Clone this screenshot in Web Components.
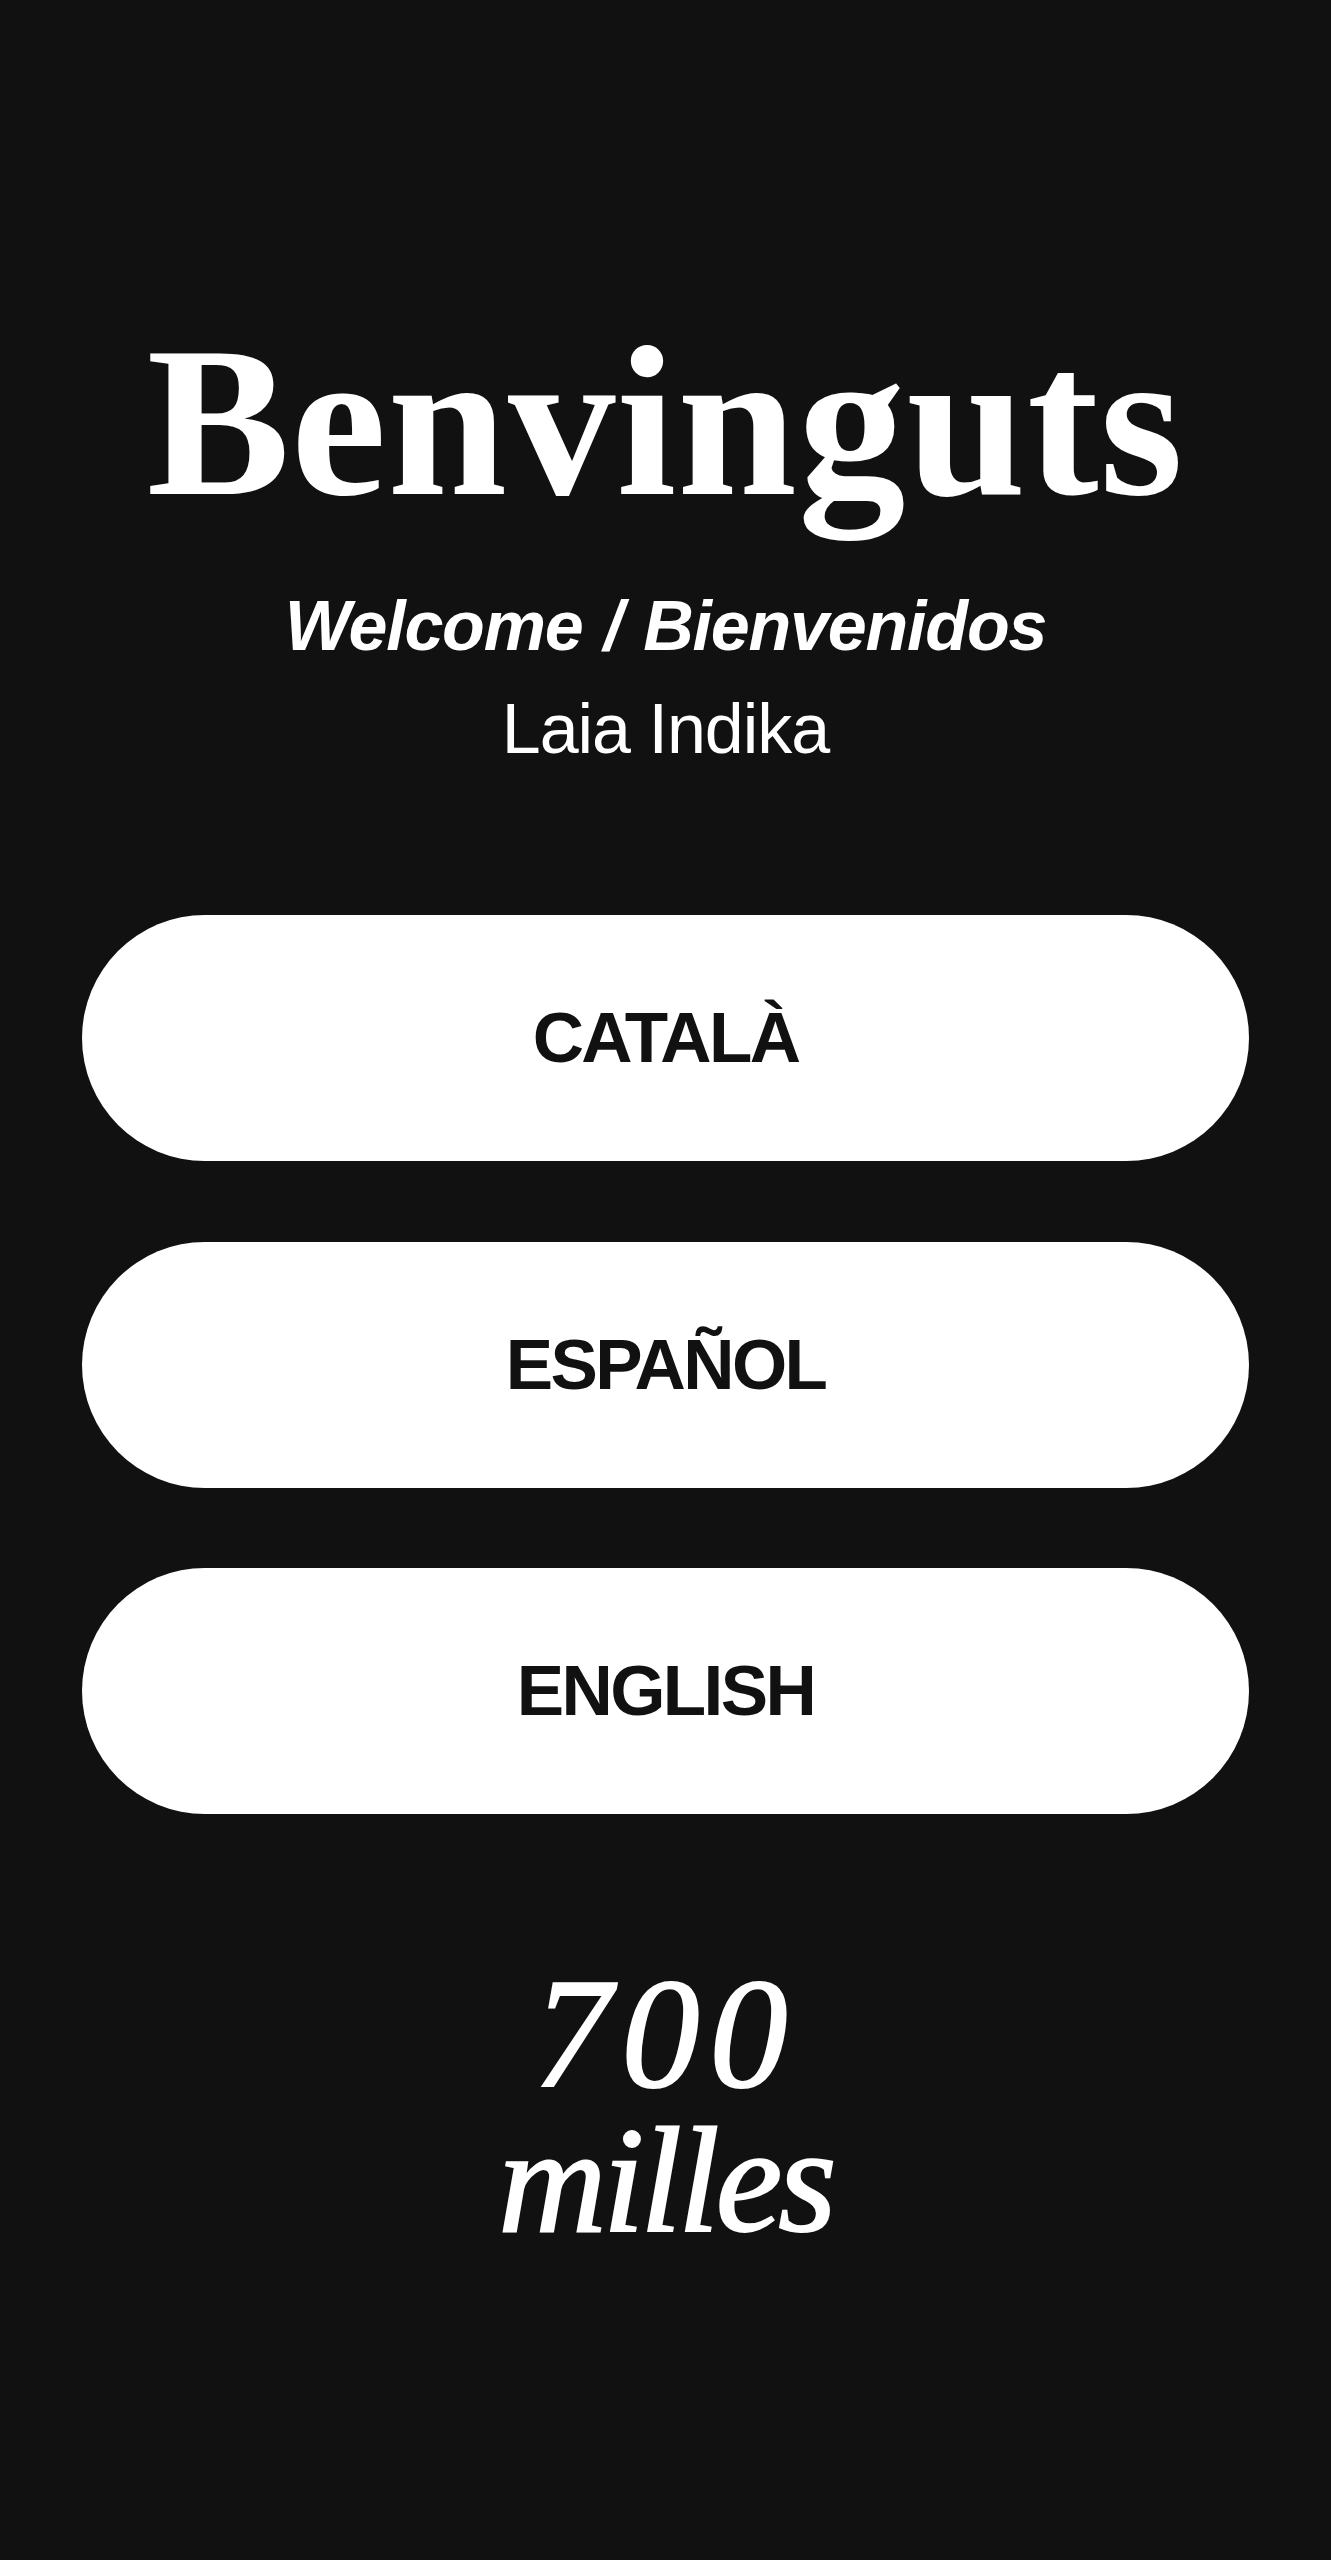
<!DOCTYPE html>
<html lang="ca">
<head>
<meta charset="utf-8">
<title>Benvinguts</title>
<style>
    html, body{
        margin:0;
        background-color:#111111;
    }
</style>
</head>
<body>
<welcome-screen>
    <welcome-header slot="header">
        <span slot="title">Benvinguts</span>
        <span slot="subtitle">Welcome / Bienvenidos</span>
        <span slot="name">Laia Indika</span>
    </welcome-header>
    <lang-button slot="languages">CATALÀ</lang-button>
    <lang-button slot="languages">ESPAÑOL</lang-button>
    <lang-button slot="languages">ENGLISH</lang-button>
    <brand-mark slot="brand">
        <span slot="top">700</span>
        <span slot="bottom">milles</span>
    </brand-mark>
</welcome-screen>

<script>
class WelcomeScreen extends HTMLElement {

    constructor() {
        super();
        this.shadow = this.attachShadow({mode: 'open'});
        this.render();
    }

    render() {
        this.shadow.innerHTML =
        `
        <style>
            :host{
                display:block;
                min-height:2560px;
                box-sizing:border-box;
                padding:314px 82px 0;
                background-color:#111111;
            }

            .languages{
                display:flex;
                flex-direction:column;
                gap:80.5px;
                margin-top:146px;
            }

            .brand{
                margin-top:146px;
            }
        </style>

        <slot name="header"></slot>
        <div class="languages">
            <slot name="languages"></slot>
        </div>
        <div class="brand">
            <slot name="brand"></slot>
        </div>
        `;
    }
}

class WelcomeHeader extends HTMLElement {

    constructor() {
        super();
        this.shadow = this.attachShadow({mode: 'open'});
        this.render();
    }

    render() {
        this.shadow.innerHTML =
        `
        <style>
            :host{
                display:block;
                color:#ffffff;
                text-align:center;
            }

            h1{
                margin:0;
                font:700 215px/215px "Liberation Serif", serif;
                letter-spacing:1px;
            }

            .subtitle{
                margin-top:57px;
                font:italic 700 70px/80px "Liberation Sans", sans-serif;
                letter-spacing:-1.2px;
                word-spacing:3px;
            }

            .name{
                margin-top:23px;
                font:400 70px/80px "Liberation Sans", sans-serif;
                letter-spacing:-1px;
            }
        </style>

        <h1><slot name="title"></slot></h1>
        <div class="subtitle"><slot name="subtitle"></slot></div>
        <div class="name"><slot name="name"></slot></div>
        `;
    }
}

class LangButton extends HTMLElement {

    constructor() {
        super();
        this.shadow = this.attachShadow({mode: 'open'});
        this.render();
    }

    render() {
        this.shadow.innerHTML =
        `
        <style>
            :host{
                display:flex;
                align-items:center;
                justify-content:center;
                height:246px;
                border-radius:123px;
                background-color:#ffffff;
                color:#111111;
                font:700 71px/80px "Liberation Sans", sans-serif;
                letter-spacing:-2.6px;
                cursor:pointer;
            }
        </style>

        <slot></slot>
        `;
    }
}

class BrandMark extends HTMLElement {

    constructor() {
        super();
        this.shadow = this.attachShadow({mode: 'open'});
        this.render();
    }

    render() {
        this.shadow.innerHTML =
        `
        <style>
            :host{
                display:flex;
                flex-direction:column;
                align-items:center;
                color:#ffffff;
                font:italic 400 150px/147px "Liberation Serif", serif;
                -webkit-text-stroke:2px #ffffff;
            }

            .top{
                font-size:156px;
                letter-spacing:10px;
            }

            .bottom{
                letter-spacing:-4px;
            }
        </style>

        <div class="top"><slot name="top"></slot></div>
        <div class="bottom"><slot name="bottom"></slot></div>
        `;
    }
}

customElements.define('welcome-screen', WelcomeScreen);
customElements.define('welcome-header', WelcomeHeader);
customElements.define('lang-button', LangButton);
customElements.define('brand-mark', BrandMark);
</script>
</body>
</html>
